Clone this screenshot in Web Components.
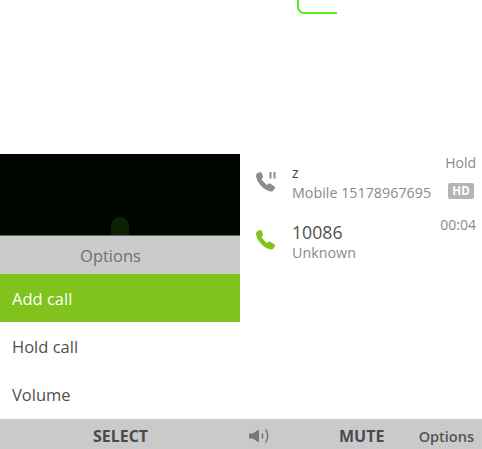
<!DOCTYPE html>
<html><head><meta charset="utf-8"><style>
html,body{margin:0;padding:0;background:#fff;font-family:"Open Sans",sans-serif}
body{width:482px;height:449px;overflow:hidden}
</style></head><body>
<call-screen></call-screen>
<template id="t-screen"><style>
:host{display:grid;grid-template-rows:154px 265px 30px;width:482px;height:449px}
.top{background:#fff}
.mark{width:40px;height:14px;margin-left:297px;box-sizing:border-box;border:solid #55f01c;border-width:0 0 2px 2px;border-bottom-left-radius:7px}
.main{display:grid;grid-template-columns:240px 242px;min-height:0}
</style><div class="top"><div class="mark"></div></div>
<div class="main"><options-pane></options-pane><call-list></call-list></div>
<soft-keys></soft-keys></template>
<template id="t-options"><style>
:host{display:grid;grid-template-rows:82px 38px 48px 48px 49px;background:#fff;min-height:0}
.video{background:#000700;display:flex;justify-content:center;align-items:flex-end;border-bottom:1px solid #666;box-sizing:border-box}
.video i{display:block;width:18px;height:18px;background:#0e2203;border-radius:9px 9px 0 0}
.title{background:#cbcbcb;color:#707070;font-size:16.500px;display:flex;align-items:center;justify-content:center;padding-right:19px}
</style><div class="video"><i></i></div><div class="title">Options</div>
<menu-item selected>Add call</menu-item><menu-item>Hold call</menu-item><menu-item>Volume</menu-item></template>
<template id="t-item"><style>
:host{display:flex;align-items:center;padding-left:12px;font-size:16.500px;color:#505050;background:#fff}
:host([selected]){background:#7fc31c;color:#fff}
</style><slot></slot></template>
<template id="t-list"><style>
:host{display:block;background:#fff}
.row{display:grid;grid-template-columns:52px 1fr auto;padding-right:6px}
.r1{height:57px}
.ic{padding:18px 0 0 15px}
.name{font-size:14px;color:#444;line-height:14px;margin-top:12px}
.r1 .sub{margin-top:4px}
.sub{font-size:14.300px;color:#8a8a8a;line-height:18px}
.big{font-size:17.700px;color:#505050;line-height:24px;margin-top:9px}
.right{display:flex;flex-direction:column;align-items:flex-end;font-size:14px;color:#8a8a8a;line-height:18px}
.hd{margin-top:11px;background:#b4b4b4;color:#fff;font-weight:700;font-size:11.500px;line-height:16px;width:26px;text-align:center;border-radius:2px;margin-right:2px}
.time{margin-top:5px}
svg{display:block}
</style>
<div class="row r1"><div class="ic"><svg width="21" height="20" viewBox="0 0 21 20"><path fill="#8c8c8c" d="M2.500 1 5.500 0Q6.500 0 7 1.500L8 5Q8 6 6.500 7 8.500 10.500 12 13L13.500 11.800Q14.500 11.300 15.500 11.800L19.500 14.500Q20.500 15.300 20 16.300L17.800 19Q16.500 20 14.500 19.300 9 17.500 5 12.500 1.500 8.500 1 4.500 .8 2 2.500 1Z"/><path fill="#8c8c8c" d="M14.500 0h2v6.500h-2zM18.500 0h2v6.500h-2z"/></svg></div>
<div><div class="name">z</div><div class="sub">Mobile 15178967695</div></div>
<div class="right"><span>Hold</span><span class="hd">HD</span></div></div>
<div class="row"><div class="ic" style="padding-top:19px"><svg width="21" height="20" viewBox="0 0 21 20"><path fill="#7fc31c" d="M2.500 1 5.500 0Q6.500 0 7 1.500L8 5Q8 6 6.500 7 8.500 10.500 12 13L13.500 11.800Q14.500 11.300 15.500 11.800L19.500 14.500Q20.500 15.300 20 16.300L17.800 19Q16.500 20 14.500 19.300 9 17.500 5 12.500 1.500 8.500 1 4.500 .8 2 2.500 1Z"/></svg></div>
<div><div class="big">10086</div><div class="sub">Unknown</div></div>
<div class="right"><span class="time">00:04</span></div></div></template>
<template id="t-keys"><style>
:host{display:grid;grid-template-columns:241px 98px 52px 91px;background:#cacaca;color:#4a4a4a;font-size:16px;align-items:center;padding-top:4px;box-sizing:border-box}
b{font-weight:700;text-align:center}
.k2{text-align:left}
.s{display:flex;padding-left:8px}
.o{text-align:right;padding-right:8px;font-size:14.500px;font-weight:600;color:#555}
</style><b>SELECT</b><span class="s"><svg width="22" height="16" viewBox="0 0 22 16"><path fill="#777" d="M0 5.500h3.500L10 1.500v13L3.500 10.500H0z"/><path fill="none" stroke="#777" stroke-width="1.500" d="M13 5.500c1 1.700 1 3.300 0 5M16.500 1.500c2.800 4 2.800 9 0 13"/></svg></span><b class="k2">MUTE</b><span class="o">Options</span></template>
<script>
function def(n,t){customElements.define(n,class extends HTMLElement{constructor(){super();this.attachShadow({mode:"open"}).appendChild(document.getElementById(t).content.cloneNode(true))}})}
def("menu-item","t-item");def("options-pane","t-options");def("call-list","t-list");def("soft-keys","t-keys");def("call-screen","t-screen");
</script>
</body></html>
